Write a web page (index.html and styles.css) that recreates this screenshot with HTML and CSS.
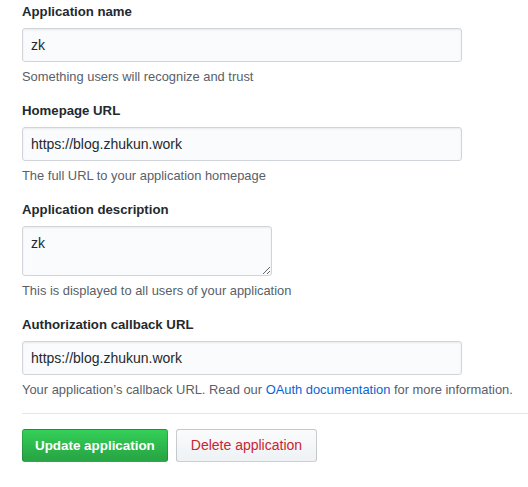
FILE: index.html
```html
<!DOCTYPE html>
<html lang="en">
<head>
<meta charset="utf-8">
<title>Application settings</title>
<link rel="stylesheet" href="styles.css">
</head>
<body>
<form class="app-form">
  <dl class="form-group">
    <dt><label class="form-label" for="name">Application name</label></dt>
    <dd>
      <input class="form-control" id="name" type="text" value="zk">
      <p class="note">Something users will recognize and trust</p>
    </dd>
  </dl>
  <dl class="form-group">
    <dt><label class="form-label" for="url">Homepage URL</label></dt>
    <dd>
      <input class="form-control" id="url" type="text" value="https://blog.zhukun.work">
      <p class="note">The full URL to your application homepage</p>
    </dd>
  </dl>
  <dl class="form-group">
    <dt><label class="form-label" for="desc">Application description</label></dt>
    <dd>
      <textarea class="form-control textarea" id="desc">zk</textarea>
      <p class="note">This is displayed to all users of your application</p>
    </dd>
  </dl>
  <dl class="form-group">
    <dt><label class="form-label" for="cb">Authorization callback URL</label></dt>
    <dd>
      <input class="form-control" id="cb" type="text" value="https://blog.zhukun.work">
      <p class="note">Your application’s callback URL. Read our <a class="link" href="#">OAuth documentation</a> for more information.</p>
    </dd>
  </dl>
  <hr class="divider">
  <div class="actions">
    <button class="btn btn-primary" type="button">Update application</button>
    <button class="btn btn-danger" type="button">Delete application</button>
  </div>
</form>
</body>
</html>
```
FILE: styles.css
```css
* { box-sizing: border-box; }

html, body {
  margin: 0;
  padding: 0;
  background: #ffffff;
}

body {
  font-family: "Liberation Sans", Arial, sans-serif;
  color: #24292e;
  overflow: hidden;
}

.app-form {
  padding: 1px 0 0 22px;
}

.form-group {
  margin: 0 0 14px 0;
}

.form-group dt,
.form-group dd {
  margin: 0;
}

.form-label {
  display: block;
  font-size: 13.2px;
  font-weight: 700;
  line-height: 21px;
  margin-bottom: 6px;
  color: #24292e;
}

.form-control {
  display: block;
  width: 440px;
  height: 34px;
  padding: 6px 8px;
  font-family: "Liberation Sans", Arial, sans-serif;
  font-size: 14px;
  line-height: 20px;
  color: #24292e;
  background-color: #fafbfc;
  border: 1px solid #d1d5da;
  border-radius: 3px;
  box-shadow: inset 0 1px 2px rgba(27, 31, 35, 0.075);
  outline: none;
  margin: 0;
}

.textarea {
  width: 250px;
  height: 50px;
  padding: 6px 8px;
  resize: both;
}

.note {
  margin: 5px 0 0 0;
  font-size: 12.9px;
  line-height: 19px;
  color: #586069;
}

.link {
  color: #0366d6;
  text-decoration: none;
}

.divider {
  margin: 0;
  height: 0;
  border: 0;
  border-top: 1px solid #e1e4e8;
}

.actions {
  display: flex;
  gap: 8px;
  margin-top: 15px;
}

.btn {
  height: 33px;
  padding: 0 12px;
  line-height: 31px;
  border-radius: 3px;
  border: 1px solid rgba(27, 31, 35, 0.2);
  font-family: "Liberation Sans", Arial, sans-serif;
  cursor: pointer;
  white-space: nowrap;
}

.btn-primary {
  color: #ffffff;
  font-size: 13.4px;
  font-weight: 700;
  background-color: #28a745;
  background-image: linear-gradient(-180deg, #34d058 0%, #28a745 90%);
}

.btn-danger {
  color: #cb2431;
  font-size: 14px;
  font-weight: 400;
  padding: 0 14px;
  background-color: #fafbfc;
  background-image: linear-gradient(-180deg, #fafbfc 0%, #eff3f6 90%);
}
```
